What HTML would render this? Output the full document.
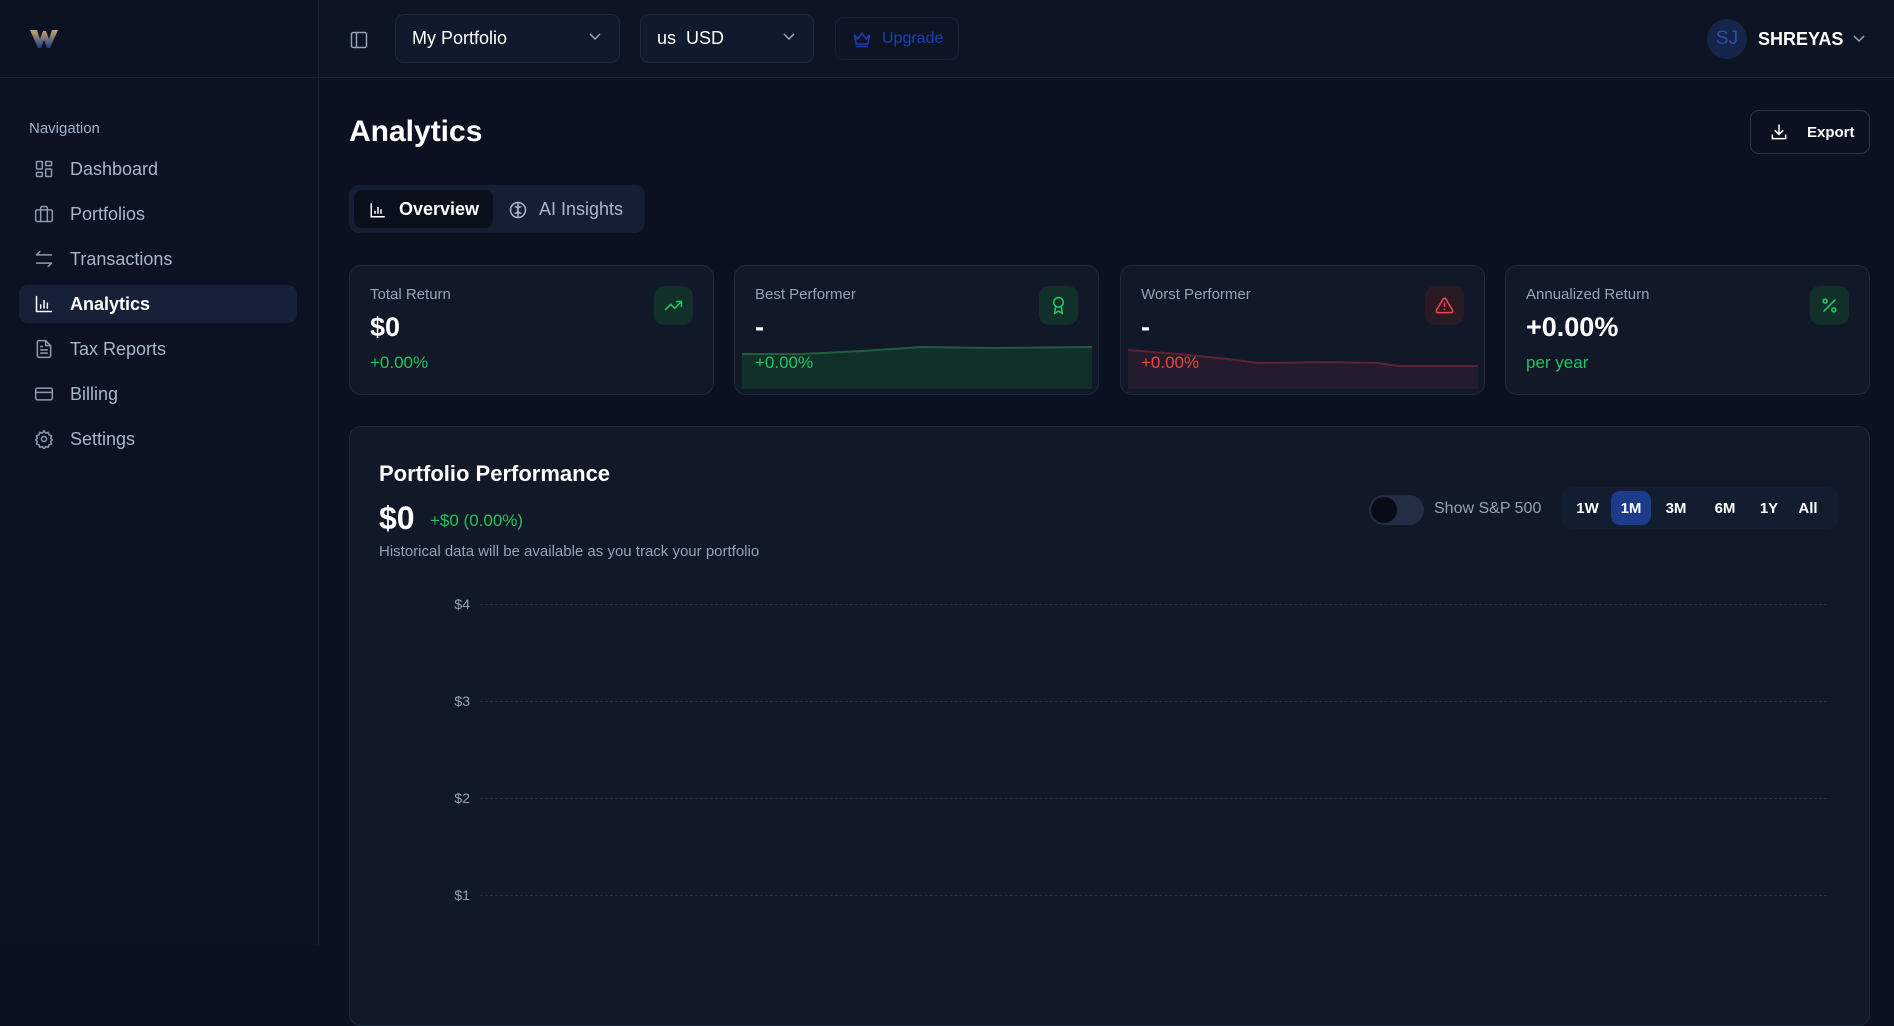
<!DOCTYPE html>
<html><head><meta charset="utf-8"><style>
*{box-sizing:border-box;margin:0;padding:0}
body{width:1894px;height:945px;overflow:hidden;background:#0b1120;font-family:"Liberation Sans",sans-serif;color:#e2e8f0;position:relative}
.abs{position:absolute}
.sidebar{left:0;top:0;width:319px;height:945px;background:#0c1221;border-right:1px solid #1a2335}
.header{left:319px;top:0;right:0;height:78px;background:#0d1424;border-bottom:1px solid #1a2335}
.sb-head{left:0;top:0;width:319px;height:78px;border-bottom:1px solid #1a2335}
.nav{left:19px;width:278px;height:38px;border-radius:9px;display:flex;align-items:center;padding-left:15px;font-size:18px;color:#a8b6cc}
.nav svg{width:20px;height:20px;margin-right:16px;stroke:#8d9ab0;fill:none;stroke-width:1.8;stroke-linecap:round;stroke-linejoin:round}
.nav.act{background:#162037;color:#fff;font-weight:bold}
.nav.act svg{stroke:#fff}
.sel{top:14px;height:49px;border:1px solid #1f2a3d;border-radius:9px;background:#111a2c;display:flex;align-items:center;padding-left:16px;font-size:18px;color:#fff}
.chev{position:absolute;right:18px;top:18px;width:12px;height:8px}
.card{top:265px;width:365px;height:130px;border:1px solid #1f2a3d;border-radius:12px;background:#111827;overflow:hidden}
.card .lbl{position:absolute;left:20px;top:20px;font-size:15px;color:#94a3b8}
.card .val{position:absolute;left:20px;top:46px;font-size:27px;font-weight:bold;color:#fff}
.card .sub{position:absolute;left:20px;top:87px;font-size:17px;color:#22c55e}
.card .ic{position:absolute;right:20px;top:20px;width:39px;height:39px;border-radius:10px;display:flex;align-items:center;justify-content:center}
.ic svg{width:19px;height:19px;fill:none;stroke-width:2;stroke-linecap:round;stroke-linejoin:round}
.grid{left:480px;width:1347px;border-top:1px dashed #24324a;height:0}
.ylab{left:430px;width:40px;text-align:right;font-size:14px;color:#94a3b8}
.rb{height:34px;top:4px;border-radius:9px;font-size:15px;font-weight:bold;color:#fff;display:flex;align-items:center;justify-content:center;position:absolute}
</style></head><body>
<div class="abs sidebar"></div>
<div class="abs sb-head"></div>
<div class="abs header"></div>
<svg class="abs" style="left:29px;top:29px" width="30" height="20" viewBox="0 0 30 20"><defs><linearGradient id="lg" x1="0" y1="0" x2="0" y2="1"><stop offset="0" stop-color="#c9a46a"/><stop offset="1" stop-color="#1e3a8a"/></linearGradient></defs><path d="M1 1h7l3 9 3-8h3l3 8 3-9h6l-8 18h-3l-3-8-3 8h-3z" fill="url(#lg)"/></svg>
<svg class="abs" style="left:349px;top:30px" width="20" height="20" viewBox="0 0 24 24" fill="none" stroke="#94a3b8" stroke-width="1.8"><rect x="3" y="3" width="18" height="18" rx="2"/><path d="M9 3v18"/></svg>
<div class="abs sel" style="left:395px;width:225px">My Portfolio<svg class="chev" viewBox="0 0 12 8" fill="none" stroke="#94a3b8" stroke-width="1.5"><path d="M1 1l5 5 5-5"/></svg></div>
<div class="abs sel" style="left:640px;width:174px">us&nbsp; USD<svg class="chev" viewBox="0 0 12 8" fill="none" stroke="#94a3b8" stroke-width="1.5"><path d="M1 1l5 5 5-5"/></svg></div>
<div class="abs" style="left:835px;top:17px;width:124px;height:43px;border:1px solid #16203a;border-radius:9px;display:flex;align-items:center;padding-left:16px;font-size:16px;color:#1e40af"><svg width="20" height="20" viewBox="0 0 24 24" fill="none" stroke="#1e40af" stroke-width="1.8" style="margin-right:10px"><path d="M3 7l4 5 5-7 5 7 4-5-2 11H5z"/><path d="M5 21h14"/></svg>Upgrade</div>
<div class="abs" style="left:1707px;top:19px;width:40px;height:40px;border-radius:50%;background:#14244a;color:#2a4fa8;font-size:19px;display:flex;align-items:center;justify-content:center">SJ</div>
<div class="abs" style="left:1758px;top:29px;font-size:18px;font-weight:bold;color:#fff">SHREYAS</div>
<svg class="abs" style="left:1853px;top:35px" width="12" height="8" viewBox="0 0 12 8" fill="none" stroke="#94a3b8" stroke-width="1.5"><path d="M1 1l5 5 5-5"/></svg>
<div class="abs" style="left:29px;top:120px;font-size:15px;color:#a0b0c8">Navigation</div>
<div class="abs nav" style="top:150px"><svg viewBox="0 0 24 24"><rect x="3" y="3" width="7" height="9" rx="1"/><rect x="14" y="3" width="7" height="5" rx="1"/><rect x="14" y="12" width="7" height="9" rx="1"/><rect x="3" y="16" width="7" height="5" rx="1"/></svg>Dashboard</div>
<div class="abs nav" style="top:195px"><svg viewBox="0 0 24 24"><rect x="2" y="7" width="20" height="14" rx="2"/><path d="M16 21V5a2 2 0 0 0-2-2h-4a2 2 0 0 0-2 2v16"/></svg>Portfolios</div>
<div class="abs nav" style="top:240px"><svg viewBox="0 0 24 24"><path d="M21 7H3l4-4M3 17h18l-4 4"/></svg>Transactions</div>
<div class="abs nav act" style="top:285px"><svg viewBox="0 0 24 24"><path d="M3 3v18h18M8 17v-4M12 17V8M16 17v-6"/></svg>Analytics</div>
<div class="abs nav" style="top:330px"><svg viewBox="0 0 24 24"><path d="M14 2H6a2 2 0 0 0-2 2v16a2 2 0 0 0 2 2h12a2 2 0 0 0 2-2V8z"/><path d="M14 2v6h6M16 13H8M16 17H8M10 9H8"/></svg>Tax Reports</div>
<div class="abs nav" style="top:375px"><svg viewBox="0 0 24 24"><rect x="2" y="5" width="20" height="14" rx="2"/><path d="M2 10h20"/></svg>Billing</div>
<div class="abs nav" style="top:420px"><svg viewBox="0 0 24 24"><circle cx="12" cy="12" r="3"/><path d="M12 2l2 3 3-1 1 3 3 1-1 3 2 2-2 2 1 3-3 1-1 3-3-1-2 3-2-3-3 1-1-3-3-1 1-3-2-2 2-2-1-3 3-1 1-3 3 1z"/></svg>Settings</div>
<div class="abs" style="left:349px;top:115px;font-size:30px;font-weight:bold;color:#fff">Analytics</div>
<div class="abs" style="left:1750px;top:110px;width:120px;height:44px;border:1px solid #2a3548;border-radius:9px;display:flex;align-items:center;padding-left:18px;font-size:15px;font-weight:bold;color:#fff"><svg width="20" height="20" viewBox="0 0 24 24" fill="none" stroke="#fff" stroke-width="1.8" style="margin-right:18px"><path d="M12 3v12M7 10l5 5 5-5M4 15v5h16v-5"/></svg>Export</div>
<div class="abs" style="left:349px;top:185px;width:296px;height:48px;border-radius:10px;background:#151f33"></div>
<div class="abs" style="left:354px;top:190px;width:139px;height:38px;border-radius:8px;background:#0a0f1c"></div>
<div class="abs" style="left:369px;top:199px;display:flex;align-items:center;font-size:18px;font-weight:bold;color:#fff"><svg width="18" height="18" viewBox="0 0 24 24" fill="none" stroke="#fff" stroke-width="2" style="margin-right:12px"><path d="M3 3v18h18M8 17v-4M12 17V8M16 17v-6"/></svg>Overview</div>
<div class="abs" style="left:508px;top:199px;display:flex;align-items:center;font-size:18px;color:#a8b6cc"><svg width="20" height="20" viewBox="0 0 24 24" fill="none" stroke="#a8b6cc" stroke-width="1.8" style="margin-right:11px"><circle cx="12" cy="12" r="9"/><path d="M12 3v18M8 8c2 0 4 1 4 4M16 8c-2 0-4 1-4 4M8 16c2 0 4-1 4-4M16 16c-2 0-4-1-4-4"/></svg>AI Insights</div>
<div class="abs card" style="left:349px"><div class="lbl">Total Return</div><div class="val">$0</div><div class="sub">+0.00%</div><div class="ic" style="background:#12302a"><svg viewBox="0 0 24 24" stroke="#22c55e"><path d="M22 7l-8.5 8.5-5-5L2 17M16 7h6v6"/></svg></div></div>
<div class="abs card" style="left:734px"><svg style="position:absolute;left:7px;top:0" width="350" height="123" viewBox="0 0 350 123" preserveAspectRatio="none"><path d="M0 88L60 88 120 85 180 81 250 82 350 81V123H0z" fill="#12302a"/><path d="M0 88L60 88 120 85 180 81 250 82 350 81" stroke="#1f5e3c" stroke-width="2" fill="none"/></svg><div class="lbl">Best Performer</div><div class="val">-</div><div class="sub">+0.00%</div><div class="ic" style="background:#12302a"><svg viewBox="0 0 24 24" stroke="#22c55e"><circle cx="12" cy="8" r="6"/><path d="M15.5 13.5L17 22l-5-3-5 3 1.5-8.5"/></svg></div></div>
<div class="abs card" style="left:1120px"><svg style="position:absolute;left:7px;top:0" width="350" height="123" viewBox="0 0 350 123" preserveAspectRatio="none"><path d="M0 84L50 88 100 93 130 97 200 96 250 97 270 100 350 100V123H0z" fill="#241c2c"/><path d="M0 84L50 88 100 93 130 97 200 96 250 97 270 100 350 100" stroke="#5a2530" stroke-width="2" fill="none"/></svg><div class="lbl">Worst Performer</div><div class="val">-</div><div class="sub" style="color:#ef4444">+0.00%</div><div class="ic" style="background:#2a1a24"><svg viewBox="0 0 24 24" stroke="#ef4444"><path d="M10.3 3.9L1.8 18a2 2 0 0 0 1.7 3h17a2 2 0 0 0 1.7-3L13.7 3.9a2 2 0 0 0-3.4 0zM12 9v4M12 17h.01"/></svg></div></div>
<div class="abs card" style="left:1505px"><div class="lbl">Annualized Return</div><div class="val">+0.00%</div><div class="sub">per year</div><div class="ic" style="background:#12302a"><svg viewBox="0 0 24 24" stroke="#22c55e"><path d="M19 5L5 19"/><circle cx="6.5" cy="6.5" r="2.5"/><circle cx="17.5" cy="17.5" r="2.5"/></svg></div></div>
<div class="abs" style="left:349px;top:426px;width:1521px;height:600px;border:1px solid #1f2a3d;border-radius:12px;background:#111827"></div>
<div class="abs" style="left:379px;top:461px;font-size:22px;font-weight:bold;color:#fff">Portfolio Performance</div>
<div class="abs" style="left:379px;top:500px;font-size:32px;font-weight:bold;color:#fff">$0</div>
<div class="abs" style="left:430px;top:511px;font-size:17px;color:#22c55e">+$0 (0.00%)</div>
<div class="abs" style="left:379px;top:543px;font-size:15px;color:#94a3b8">Historical data will be available as you track your portfolio</div>
<div class="abs" style="left:1369px;top:495px;width:55px;height:30px;border-radius:15px;background:#232e44"></div>
<div class="abs" style="left:1371px;top:497px;width:26px;height:26px;border-radius:50%;background:#080c16"></div>
<div class="abs" style="left:1434px;top:500px;font-size:16px;color:#94a3b8">Show S&amp;P 500</div>
<div class="abs" style="left:1561px;top:487px;width:278px;height:42px;border-radius:10px;background:#131d30">
<div class="rb" style="left:8px;width:37px">1W</div>
<div class="rb" style="left:50px;width:40px;background:#1e3a8a">1M</div>
<div class="rb" style="left:95px;width:40px">3M</div>
<div class="rb" style="left:144px;width:40px">6M</div>
<div class="rb" style="left:193px;width:30px">1Y</div>
<div class="rb" style="left:232px;width:30px">All</div>
</div>
<div class="abs ylab" style="top:596px">$4</div><div class="abs grid" style="top:604px"></div>
<div class="abs ylab" style="top:693px">$3</div><div class="abs grid" style="top:701px"></div>
<div class="abs ylab" style="top:790px">$2</div><div class="abs grid" style="top:798px"></div>
<div class="abs ylab" style="top:887px">$1</div><div class="abs grid" style="top:895px"></div>
</body></html>
